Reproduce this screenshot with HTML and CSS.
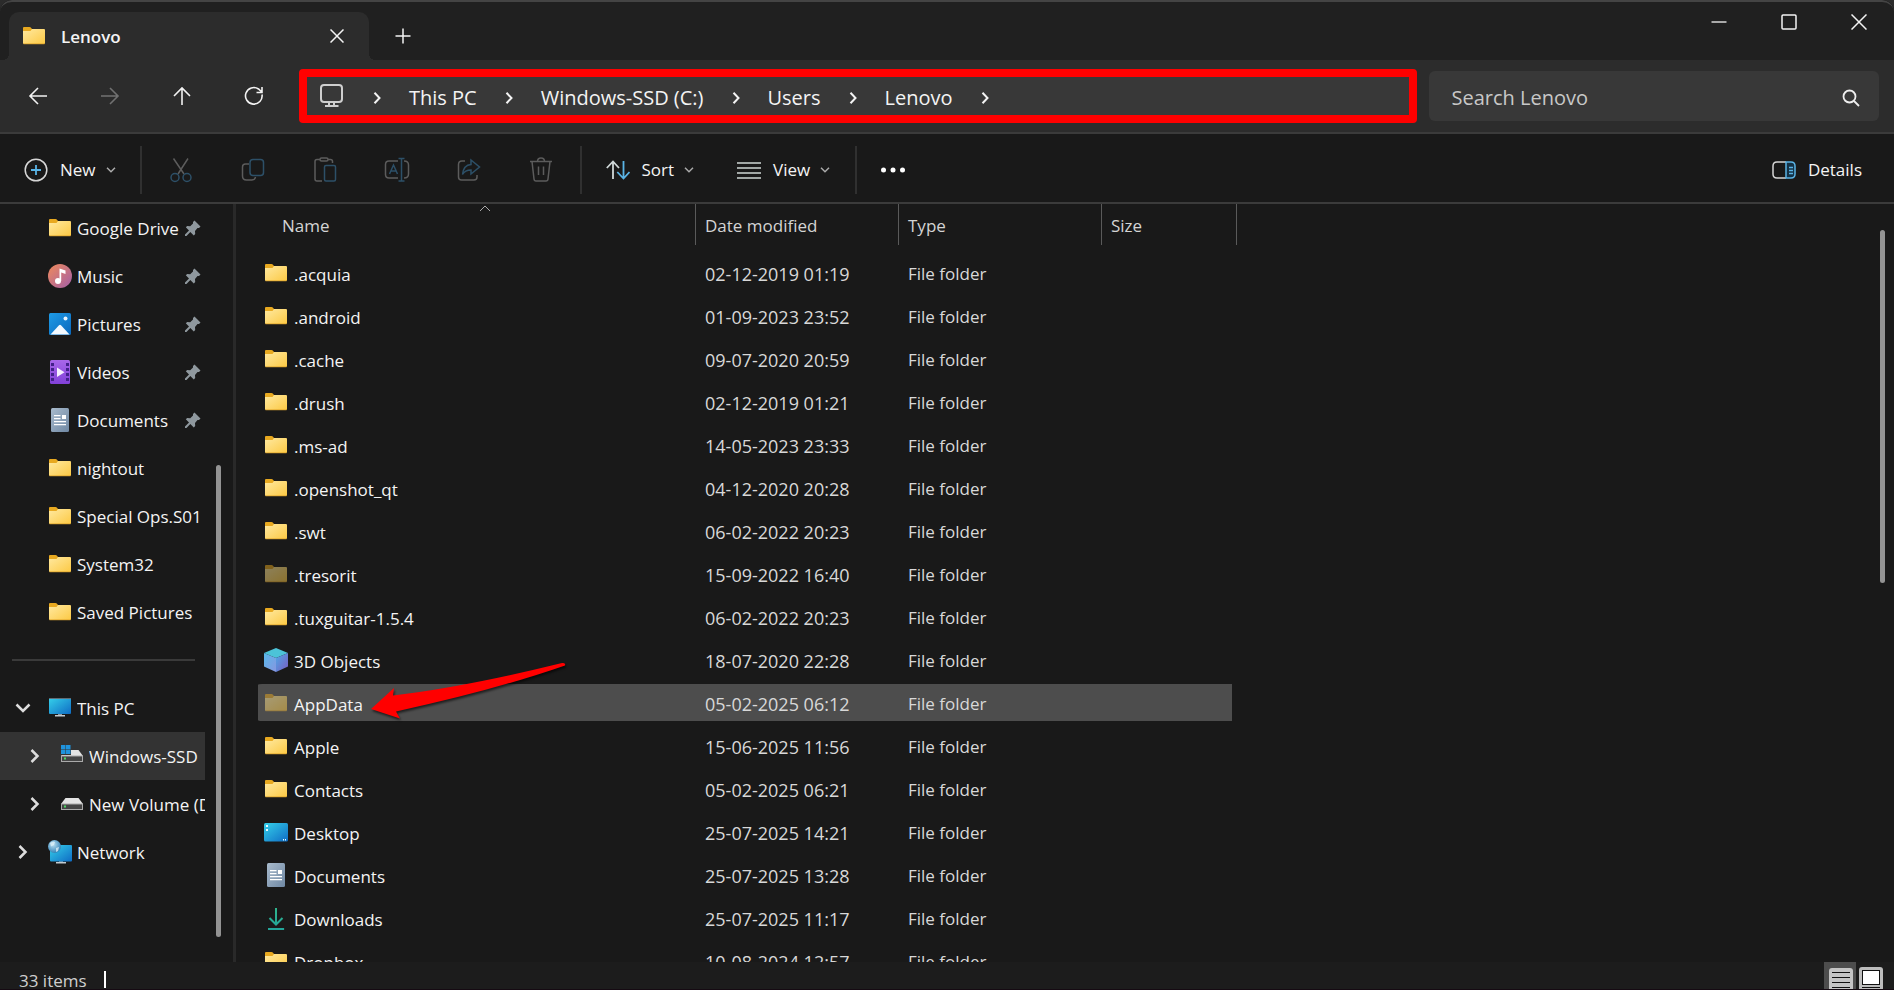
FILE: index.html
```html
<!DOCTYPE html>
<html lang="en">
<head>
<meta charset="utf-8">
<title>Lenovo</title>
<link rel="stylesheet" href="styles.css">
</head>
<body>
<svg class="sprite" aria-hidden="true">
  <defs>
    <linearGradient id="g-folder" x1="0" y1="0" x2="1" y2="1"><stop offset="0" stop-color="#ffe9a0"/><stop offset="1" stop-color="#fcc944"/></linearGradient>
    <linearGradient id="g-music" x1="0" y1="0" x2="1" y2="1"><stop offset="0" stop-color="#f08a5a"/><stop offset="1" stop-color="#a35fa8"/></linearGradient>
    <linearGradient id="g-pic" x1="0" y1="0" x2="1" y2="1"><stop offset="0" stop-color="#1e9be6"/><stop offset="1" stop-color="#0a68bd"/></linearGradient>
    <linearGradient id="g-vid" x1="0" y1="0" x2="0" y2="1"><stop offset="0" stop-color="#a867ea"/><stop offset="1" stop-color="#8140d8"/></linearGradient>
    <linearGradient id="g-doc" x1="0" y1="0" x2="1" y2="1"><stop offset="0" stop-color="#a9bbcd"/><stop offset="1" stop-color="#6f88a3"/></linearGradient>
    <linearGradient id="g-screen" x1="0" y1="0" x2="1" y2="1"><stop offset="0" stop-color="#35d0ea"/><stop offset="1" stop-color="#0f6cc4"/></linearGradient>
    <linearGradient id="g-cube" x1="0" y1="0" x2="1" y2="1"><stop offset="0" stop-color="#4fa8e8"/><stop offset="1" stop-color="#7a5cc0"/></linearGradient>
    <linearGradient id="g-cubel" x1="0" y1="0" x2="1" y2="1"><stop offset="0" stop-color="#58b9ec"/><stop offset="1" stop-color="#8796e0"/></linearGradient>
    <radialGradient id="g-globe" cx="0.4" cy="0.35" r="0.7"><stop offset="0" stop-color="#b9dff2"/><stop offset="1" stop-color="#2b7db3"/></radialGradient>
    <linearGradient id="g-down" x1="0" y1="0" x2="0" y2="1"><stop offset="0" stop-color="#2fb58c"/><stop offset="1" stop-color="#23a59a"/></linearGradient>
  </defs>
  <symbol id="i-folder" viewBox="0 0 24 24"><path fill="#e8a920" d="M1 4q0-1 1-1h5.500q.8 0 1.300.6L10 5v5H1z"/><path fill="url(#g-folder)" d="M1 7h7.500l1.500-2h12q1 0 1 1v13q0 1-1 1H2q-1 0-1-1z"/><path stroke="#e0a52c" stroke-width=".8" d="M1.500 19.800h21"/></symbol>
  <symbol id="i-music" viewBox="0 0 24 24"><circle cx="12" cy="12" r="12" fill="url(#g-music)"/><circle cx="10" cy="17" r="3" fill="#fff"/><path fill="#fff" d="M11.500 17V4.500l6 2V10l-4.300-1.500V17z"/></symbol>
  <symbol id="i-pictures" viewBox="0 0 24 24"><rect x="1" y="1" width="22" height="22" rx="1.500" fill="url(#g-pic)"/><path fill="#f2f9ff" d="M2.500 22.500 11 13.300q1-.9 2 0l8.500 9.200z"/><circle cx="17.500" cy="6.500" r="2" fill="#e8f5ff"/></symbol>
  <symbol id="i-videos" viewBox="0 0 24 24"><rect x="2" width="20" height="24" rx="1.500" fill="url(#g-vid)"/><path fill="#42208a" d="M3 3h3v3H3zM3 8h3v3H3zM3 13h3v3H3zM3 18h3v3H3zM18 3h3v3h-3zM18 8h3v3h-3zM18 13h3v3h-3zM18 18h3v3h-3z"/><path fill="#f6efff" d="M9 7.500v9.500l7.500-4.800z"/></symbol>
  <symbol id="i-documents" viewBox="0 0 24 24"><rect x="3" width="18" height="24" rx="1.500" fill="url(#g-doc)"/><path stroke="#fff" stroke-width="1.200" d="M6 7.600h6.500M6 10.600h6.500M6 13.700h12M6 16.700h12"/><path fill="#fff" d="M14 7h4v4h-4z"/></symbol>
  <symbol id="i-pc" viewBox="0 0 24 24"><path fill="#8d979e" d="M10 17h4v3h-4z"/><path fill="#c3cbd0" d="M7 19h10v1.500H7z"/><rect x="1" y="2" width="22" height="16" rx="1" fill="url(#g-screen)"/><path stroke="#5f6d76" d="M1 2.500h22"/></symbol>
  <symbol id="i-drive" viewBox="0 0 24 24"><path fill="#e4e4e4" d="M5.500 6h13L23 12H1z"/><path fill="#aaa" d="M1 11.500h22V18H1z"/><path fill="#454545" d="M2 12.500h20V17H2z"/><path fill="#4cd964" d="M4 13.500h2v2H4z"/></symbol>
  <symbol id="i-windrive" viewBox="0 0 24 24"><path fill="#e4e4e4" d="M5.500 6h13L23 12H1z"/><path fill="#aaa" d="M1 11.500h22V18H1z"/><path fill="#454545" d="M2 12.500h20V17H2z"/><path fill="#4cd964" d="M4 13.500h2v2H4z"/><path fill="#333" d="M0 0h11v11H0z"/><path fill="#1f93dd" d="M1 1h4.500v4.500H1zM6 1h4.500v4.500H6zM1 6h4.500v4H1zM6 6h4.500v4H6z"/></symbol>
  <symbol id="i-network" viewBox="0 0 24 24"><path fill="#8d979e" d="M11 20h4v3h-4z"/><path fill="#c3cbd0" d="M8 22h10v1.500H8z"/><rect x="2" y="5" width="22" height="16.500" rx="1" fill="url(#g-screen)"/><circle cx="6.500" cy="6.500" r="6.500" fill="url(#g-globe)"/><path fill="#e3f3fa" opacity=".75" d="M2 3q3-2.500 5-1l-1 3-3 1.500zM8 8l3-1-1 4-2 1z"/></symbol>
  <symbol id="i-cube" viewBox="0 0 24 24"><path fill="#4cc3d8" d="M12 0 24 5 12 10 0 5z"/><path fill="url(#g-cubel)" d="M0 5l12 5v14L0 18.500z"/><path fill="url(#g-cube)" d="M24 5l-12 5v14l12-5.500z"/></symbol>
  <symbol id="i-desktop" viewBox="0 0 24 24"><rect y="3" width="24" height="18.500" rx="1.500" fill="url(#g-screen)"/><path fill="#e9fbff" d="M2 5h2v2H2zM2 9h2v2H2zM19 19h1v1.500h-1zM21 19h1v1.500h-1z"/></symbol>
  <symbol id="i-download" viewBox="0 0 24 24"><path fill="none" stroke="url(#g-down)" stroke-width="2" d="M12 2v16.500M5.500 12l6.500 6.500 6.500-6.500M4 23h16.100"/></symbol>
  <symbol id="i-pin" viewBox="0 0 16 16"><path fill="#8f989e" d="M9.500.5 15.500 6.500 14 8h-1.500l-2.500 3 .2 3-1.400 1.400-3.500-3.500L1.500 16 0 15.900 0 14.500l4-4L.8 7.300 2.200 6l3 .2L8 3.500V2z"/></symbol>
  <symbol id="i-right" viewBox="0 0 10 16"><path fill="none" stroke="currentColor" stroke-width="2.500" d="M1.500 2 7.500 8l-6 6"/></symbol>
  <symbol id="i-open" viewBox="0 0 16 10"><path fill="none" stroke="currentColor" stroke-width="2.500" d="M1.500 1.500 8 8l6.500-6.500"/></symbol>
  <symbol id="i-crumb" viewBox="0 0 8 12"><path fill="none" stroke="currentColor" stroke-width="2" d="M1.500 .8 6.500 6l-5 5.200"/></symbol>
  <symbol id="i-drop" viewBox="0 0 10 6"><path fill="none" stroke="#aaa" stroke-width="1.500" d="M1 .8l4 4 4-4"/></symbol>
</svg>

<div class="window">
  <header class="titlebar">
    <div class="tab">
      <svg class="icon"><use href="#i-folder"/></svg>
      <span class="tab-name">Lenovo</span>
      <button class="tab-close" aria-label="Close tab"><svg width="14" height="14" fill="none" stroke="currentColor" stroke-width="1.500"><path d="M.5.5l13 13M13.500.5l-13 13"/></svg></button>
    </div>
    <button class="tab-new" aria-label="New tab"><svg width="16" height="16" stroke="currentColor" stroke-width="1.500"><path d="M8 .5v15M.5 8h15"/></svg></button>
    <div class="controls">
      <button aria-label="Minimize"><svg width="16" height="16"><path stroke="currentColor" stroke-width="1.300" d="M.5 8h15"/></svg></button>
      <button aria-label="Maximize"><svg width="16" height="16"><rect x="1" y="1" width="14" height="14" rx="1" fill="none" stroke="currentColor" stroke-width="1.500"/></svg></button>
      <button aria-label="Close"><svg width="16" height="16"><path stroke="currentColor" stroke-width="1.500" d="M.5.5l15 15M15.500.5l-15 15"/></svg></button>
    </div>
  </header>

  <div class="navbar">
    <div class="history">
      <button aria-label="Back"><svg width="20" height="20"><path d="M19 10H2M10 2l-8 8 8 8"/></svg></button>
      <button aria-label="Forward" disabled><svg width="20" height="20"><path d="M1 10h17M10 2l8 8-8 8"/></svg></button>
      <button aria-label="Up"><svg width="20" height="20"><path d="M10 19V2M2 10l8-8 8 8"/></svg></button>
      <button aria-label="Refresh"><svg width="20" height="20"><path d="M18 8.500A8.300 8.300 0 1 1 14.500 3l3.300 3M18 1v5.500h-5.500"/></svg></button>
    </div>
    <nav class="address" aria-label="Address">
      <svg class="monitor" width="26" height="26" fill="none" stroke="#cfcfcf" stroke-width="2"><rect x="2" y="2" width="21" height="17" rx="3"/><path d="M10 19v4M15 19v4M6 23h13.500"/></svg>
      <svg class="crumb"><use href="#i-crumb"/></svg>
      <a href="#">This PC</a>
      <svg class="crumb"><use href="#i-crumb"/></svg>
      <a href="#">Windows-SSD (C:)</a>
      <svg class="crumb"><use href="#i-crumb"/></svg>
      <a href="#">Users</a>
      <svg class="crumb"><use href="#i-crumb"/></svg>
      <a href="#">Lenovo</a>
      <svg class="crumb"><use href="#i-crumb"/></svg>
    </nav>
    <label class="search">
      <input type="text" placeholder="Search Lenovo" aria-label="Search Lenovo">
      <svg width="18" height="18" fill="none" stroke="#eee" stroke-width="1.800"><circle cx="7.500" cy="7.500" r="6"/><path d="M12 12l5 5"/></svg>
    </label>
  </div>

  <div class="toolbar">
    <button class="menu menu-new"><svg width="24" height="24" fill="none" stroke-width="1.500"><circle cx="12" cy="12" r="10.800" stroke="#d6d6d6"/><path stroke="#5ab4e6" stroke-width="1.800" d="M12 7v10M7 12h10"/></svg>New<svg class="drop"><use href="#i-drop"/></svg></button>
    <span class="rule"></span>
    <div class="tools">
      <button aria-label="Cut" disabled><svg width="24" height="26"><path class="gray" d="M4.500 1.500 15 17M19 1.500 9 17"/><circle class="blue" cx="6" cy="20.500" r="4"/><circle class="blue" cx="18" cy="20.500" r="4"/></svg></button>
      <button aria-label="Copy" disabled><svg width="24" height="26"><path class="gray" d="M8 7H4.500Q1.500 7 1.500 10v9q0 4 4 4H11q3 0 3.500-3"/><rect class="blue" x="9" y="2.500" width="13.500" height="16" rx="3"/></svg></button>
      <button aria-label="Paste" disabled><svg width="24" height="26"><path class="gray" d="M9 24H4q-2 0-2-2V4.500q0-2 2-2h3M15 2.500h2.500q2 0 2 2V6"/><rect class="gray" x="7" y="1" width="8" height="3" rx="1.500"/><rect class="blue" x="11.500" y="8.500" width="11" height="15.500" rx="1.500"/></svg></button>
      <button aria-label="Rename" disabled><svg width="26" height="26"><path class="gray" d="M14 4H5Q1.500 4 1.500 7.500v10Q1.500 21 5 21h9M20 4q4.500 0 4.500 4v9q0 4-4.500 4"/><path class="blue" d="M5.500 17 9.500 8l4 9M7 14h5M17.500 1.500V24M14.500 1.500h6M14.500 24h6"/></svg></button>
      <button aria-label="Share" disabled><svg width="24" height="26"><path class="gray" d="M8 4H5Q1.500 4 1.500 7.500V20q0 3 3 3H17q3 0 3-3v-2"/><path class="blue" d="M14 3l8.500 7-8.500 7v-4q-6 0-8.500 4.500Q6.500 8 14 7.500z"/></svg></button>
      <button aria-label="Delete" disabled><svg width="24" height="26"><path class="gray" d="M1 4.500h22M3 4.500 5 22q.2 2 2 2h10q1.800 0 2-2l2-17.500M8.500 4.500q0-3.500 3.500-3.500t3.500 3.500M9.500 9.500V18M14.500 9.500V18"/></svg></button>
    </div>
    <span class="rule"></span>
    <button class="menu menu-sort"><svg width="24" height="20" fill="none" stroke-width="1.800"><path stroke="#d0d8d8" d="M7 19V2M.8 8 7 1.500 13 8"/><path stroke="#5ab4e6" d="M17.500 1v17M11.300 12l6.200 6.500 6-6.500"/></svg>Sort<svg class="drop"><use href="#i-drop"/></svg></button>
    <button class="menu menu-view"><svg width="24" height="20" stroke="#d0d8d5" stroke-width="1.500"><path d="M0 3h24M0 8h24M0 13h24M0 18h24"/></svg>View<svg class="drop"><use href="#i-drop"/></svg></button>
    <span class="rule"></span>
    <button class="more" aria-label="See more"><svg width="24" height="8" fill="#fff"><circle cx="2.500" cy="4" r="2.500"/><circle cx="12" cy="4" r="2.500"/><circle cx="21.500" cy="4" r="2.500"/></svg></button>
    <button class="menu menu-details"><svg width="24" height="20" fill="none" stroke-width="1.500"><path stroke="#d6d6d6" d="M14 2H5Q1 2 1 6v8q0 4 4 4h9"/><path stroke="#5ab4e6" fill="#143246" d="M14 2h5q4 0 4 4v8q0 4-4 4h-5z"/><path stroke="#5ab4e6" d="M17 7.500h4M17 10.500h4M17 13.500h4"/></svg>Details</button>
  </div>

  <div class="main">
    <aside class="sidebar">
      <nav class="tree" aria-label="Folders">
        <div class="node"><span class="twist"></span><svg class="icon"><use href="#i-folder"/></svg><a href="#">Google Drive</a><svg class="pin"><use href="#i-pin"/></svg></div>
        <div class="node"><span class="twist"></span><svg class="icon"><use href="#i-music"/></svg><a href="#">Music</a><svg class="pin"><use href="#i-pin"/></svg></div>
        <div class="node"><span class="twist"></span><svg class="icon"><use href="#i-pictures"/></svg><a href="#">Pictures</a><svg class="pin"><use href="#i-pin"/></svg></div>
        <div class="node"><span class="twist"></span><svg class="icon"><use href="#i-videos"/></svg><a href="#">Videos</a><svg class="pin"><use href="#i-pin"/></svg></div>
        <div class="node"><span class="twist"></span><svg class="icon"><use href="#i-documents"/></svg><a href="#">Documents</a><svg class="pin"><use href="#i-pin"/></svg></div>
        <div class="node"><span class="twist"></span><svg class="icon"><use href="#i-folder"/></svg><a href="#">nightout</a></div>
        <div class="node"><span class="twist"></span><svg class="icon"><use href="#i-folder"/></svg><a href="#">Special Ops.S01</a></div>
        <div class="node"><span class="twist"></span><svg class="icon"><use href="#i-folder"/></svg><a href="#">System32</a></div>
        <div class="node"><span class="twist"></span><svg class="icon"><use href="#i-folder"/></svg><a href="#">Saved Pictures</a></div>
        <hr>
        <div class="node"><button class="twist" aria-label="Collapse This PC"><svg width="16" height="10"><use href="#i-open"/></svg></button><svg class="icon"><use href="#i-pc"/></svg><a href="#">This PC</a></div>
        <div class="node child current"><button class="twist" aria-label="Expand Windows-SSD"><svg width="10" height="16"><use href="#i-right"/></svg></button><svg class="icon"><use href="#i-windrive"/></svg><a href="#">Windows-SSD</a></div>
        <div class="node child"><button class="twist" aria-label="Expand New Volume"><svg width="10" height="16"><use href="#i-right"/></svg></button><svg class="icon"><use href="#i-drive"/></svg><a href="#">New Volume (D:)</a></div>
        <div class="node"><button class="twist" aria-label="Expand Network"><svg width="10" height="16"><use href="#i-right"/></svg></button><svg class="icon"><use href="#i-network"/></svg><a href="#">Network</a></div>
      </nav>
      <div class="side-thumb"></div>
    </aside>

    <div class="files">
      <table>
        <colgroup><col class="c-name"><col class="c-date"><col class="c-type"><col class="c-size"></colgroup>
        <thead>
          <tr>
            <th><div>Name<svg class="sorted" width="12" height="7" fill="none" stroke="#aaa"><path d="M1 6l5-5 5 5"/></svg></div></th>
            <th><div>Date modified</div></th>
            <th><div>Type</div></th>
            <th><div>Size</div></th>
          </tr>
        </thead>
        <tbody>
          <tr><td><div><svg class="icon"><use href="#i-folder"/></svg>.acquia</div></td><td>02-12-2019 01:19</td><td>File folder</td><td></td></tr>
          <tr><td><div><svg class="icon"><use href="#i-folder"/></svg>.android</div></td><td>01-09-2023 23:52</td><td>File folder</td><td></td></tr>
          <tr><td><div><svg class="icon"><use href="#i-folder"/></svg>.cache</div></td><td>09-07-2020 20:59</td><td>File folder</td><td></td></tr>
          <tr><td><div><svg class="icon"><use href="#i-folder"/></svg>.drush</div></td><td>02-12-2019 01:21</td><td>File folder</td><td></td></tr>
          <tr><td><div><svg class="icon"><use href="#i-folder"/></svg>.ms-ad</div></td><td>14-05-2023 23:33</td><td>File folder</td><td></td></tr>
          <tr><td><div><svg class="icon"><use href="#i-folder"/></svg>.openshot_qt</div></td><td>04-12-2020 20:28</td><td>File folder</td><td></td></tr>
          <tr><td><div><svg class="icon"><use href="#i-folder"/></svg>.swt</div></td><td>06-02-2022 20:23</td><td>File folder</td><td></td></tr>
          <tr><td><div><svg class="icon hidden-item"><use href="#i-folder"/></svg>.tresorit</div></td><td>15-09-2022 16:40</td><td>File folder</td><td></td></tr>
          <tr><td><div><svg class="icon"><use href="#i-folder"/></svg>.tuxguitar-1.5.4</div></td><td>06-02-2022 20:23</td><td>File folder</td><td></td></tr>
          <tr><td><div><svg class="icon"><use href="#i-cube"/></svg>3D Objects</div></td><td>18-07-2020 22:28</td><td>File folder</td><td></td></tr>
          <tr class="selected"><td><div><svg class="icon hidden-item"><use href="#i-folder"/></svg>AppData<svg class="arrow" width="210" height="72"><path fill="#f00" d="M6 53 29 32l-1 7.500Q100 31 197 7q4-.5 3 2.500Q130 34 31 55.500l4 7z"/></svg></div></td><td>05-02-2025 06:12</td><td>File folder</td><td></td></tr>
          <tr><td><div><svg class="icon"><use href="#i-folder"/></svg>Apple</div></td><td>15-06-2025 11:56</td><td>File folder</td><td></td></tr>
          <tr><td><div><svg class="icon"><use href="#i-folder"/></svg>Contacts</div></td><td>05-02-2025 06:21</td><td>File folder</td><td></td></tr>
          <tr><td><div><svg class="icon"><use href="#i-desktop"/></svg>Desktop</div></td><td>25-07-2025 14:21</td><td>File folder</td><td></td></tr>
          <tr><td><div><svg class="icon"><use href="#i-documents"/></svg>Documents</div></td><td>25-07-2025 13:28</td><td>File folder</td><td></td></tr>
          <tr><td><div><svg class="icon"><use href="#i-download"/></svg>Downloads</div></td><td>25-07-2025 11:17</td><td>File folder</td><td></td></tr>
          <tr><td><div><svg class="icon"><use href="#i-folder"/></svg>Dropbox</div></td><td>10-08-2024 12:57</td><td>File folder</td><td></td></tr>
        </tbody>
      </table>
    </div>
    <div class="main-scroll"><div class="main-thumb"></div></div>
  </div>

  <footer class="status">
    <span class="count">33 items</span><span class="caret"></span>
    <div class="modes">
      <button class="on" aria-label="Details view"><svg width="24" height="24"><rect width="24" height="24" rx="3" fill="#c4c4c4"/><path stroke="#111" d="M3 4.500h18M3 9.500h18M3 14.500h18M3 19.500h18"/></svg></button>
      <button aria-label="Large icons view"><svg width="24" height="24"><rect width="24" height="24" rx="3" fill="#bdbdbd"/><rect x="3.500" y="3.500" width="17" height="14" fill="#fff" stroke="#111"/><path stroke="#111" d="M3 20.500h18"/></svg></button>
    </div>
  </footer>
</div>
</body>
</html>
```
FILE: styles.css
```css
* { box-sizing: border-box; }

body {
  margin: 0;
  background: #2b2b2b;
  color: #f4f4f4;
  font: 17px/24px "Open Sans", "Noto Sans", sans-serif;
}

button {
  display: flex;
  align-items: center;
  justify-content: center;
  padding: 0;
  border: 0;
  background: none;
  color: inherit;
  font: inherit;
}

a { color: inherit; text-decoration: none; }
svg { display: block; flex: none; }

.sprite { position: absolute; width: 0; height: 0; }
.icon { width: 24px; height: 24px; }

.window {
  display: grid;
  grid-template-rows: 60px 74px 70px minmax(0, 1fr) 28px;
  height: 100vh;
  overflow: hidden;
  background: #191919;
  border-radius: 12px 12px 0 0;
}

/* Title bar */
.titlebar {
  display: flex;
  align-items: flex-start;
  padding-left: 9px;
  background: #202020;
  border-top: 2px solid #444;
  border-radius: 12px 12px 0 0;
}

.tab {
  position: relative;
  display: flex;
  align-items: center;
  width: 360px;
  height: 48px;
  margin-top: 10px;
  padding: 0 25px 0 13px;
  background: #2c2c2c;
  border-radius: 10px 10px 0 0;
}

.tab::before,
.tab::after {
  content: "";
  position: absolute;
  bottom: 0;
  width: 6px;
  height: 6px;
}

.tab::before { right: 100%; background: radial-gradient(circle at 0 0, #202020 6px, #2c2c2c 6px); }
.tab::after { left: 100%; background: radial-gradient(circle at 100% 0, #202020 6px, #2c2c2c 6px); }

.tab-name { margin-left: 15px; padding-top: 1px; font-weight: 600; }
.tab-close { margin-left: auto; }
.tab-new { width: 68px; height: 48px; margin-top: 10px; }
.controls { display: flex; margin-left: auto; }
.controls button { width: 70px; height: 40px; }

/* Navigation bar */
.navbar {
  display: flex;
  align-items: center;
  padding: 0 15px 0 2px;
  background: #2c2c2c;
  border-bottom: 2px solid #3b3b3b;
}

.history { display: flex; margin-right: 9px; }
.history button { width: 72px; height: 48px; }
.history svg { fill: none; stroke: #f2f2f2; stroke-width: 1.6; }
.history button:disabled svg { stroke: #717171; }

.address {
  display: flex;
  flex: 1;
  align-items: center;
  height: 54px;
  margin-right: 12px;
  padding: 4px 0 0 12px;
  background: #383838;
  border: 8px solid #f00;
  border-radius: 4px;
  font-size: 20px;
  white-space: nowrap;
}

.monitor { margin-bottom: 4px; }
.crumb { width: 8px; height: 12px; margin: 0 28px; }

.search {
  display: flex;
  align-items: center;
  width: 24%;
  height: 50px;
  padding: 3px 19px 0 23px;
  background: #383838;
  border-radius: 6px;
}

.search input {
  flex: 1;
  min-width: 0;
  padding: 0;
  border: 0;
  outline: 0;
  background: none;
  color: #fff;
  font: inherit;
  font-size: 20px;
}

.search input::placeholder { color: #c8c8c8; opacity: 1; }

/* Command bar */
.toolbar {
  display: flex;
  align-items: center;
  padding: 4px 32px 0 24px;
  border-bottom: 2px solid #3b3b3b;
}

.menu { gap: 12px; height: 48px; }
.drop { width: 10px; height: 6px; margin-left: -2px; }
.rule { width: 2px; height: 48px; background: #303030; }
.menu-new { margin-right: 24px; }
.tools { display: flex; margin: 0 3px; }
.tools button { width: 72px; height: 48px; }
.tools svg { fill: none; stroke-width: 1.5; }
.gray { stroke: #5c5c5c; }
.blue { stroke: #2d5068; }
.menu-sort { margin: 0 43px 0 24px; }
.menu-view { margin-right: 25px; }
.more { width: 72px; height: 48px; }
.menu-details { margin-left: auto; }

/* Content */
.main { display: flex; min-height: 0; overflow: hidden; }

.sidebar {
  display: flex;
  flex: none;
  width: 236px;
  border-right: 3px solid #292929;
}

.tree { width: 205px; }

.node {
  display: flex;
  align-items: center;
  height: 48px;
  padding-left: 12px;
  overflow: hidden;
}

.node a {
  flex: 1;
  min-width: 0;
  margin-left: 5px;
  padding-top: 2px;
  overflow: hidden;
  white-space: nowrap;
}

.child { padding-left: 24px; }
.current { background: #333; }
.twist { flex: none; width: 22px; margin-right: 14px; color: #ddd; }
.pin { width: 16px; height: 16px; margin-right: 4px; }

.tree hr {
  height: 2px;
  margin: 23px 10px 23px 12px;
  border: 0;
  background: #3a3a3a;
}

.side-thumb {
  align-self: flex-end;
  width: 5px;
  height: 472px;
  margin: 0 0 25px 11px;
  border-radius: 3px;
  background: #939393;
}

.files { flex: 1; min-width: 0; padding-left: 22px; overflow: hidden; }

table {
  width: 979px;
  table-layout: fixed;
  border-spacing: 0;
}

.c-name { width: 437px; }
.c-date, .c-type { width: 203px; }
.c-size { width: 136px; }

th, td { padding: 0; text-align: left; }
th { height: 47px; vertical-align: top; font-weight: 400; }

th div {
  position: relative;
  height: 41px;
  padding: 10px 0 0 9px;
  border-left: 1px solid #5a5a5a;
  color: #d4d4d4;
}

th:first-child div { padding-left: 23px; border-color: transparent; }
th:last-child div { border-right: 1px solid #5a5a5a; }
.sorted { position: absolute; top: 1px; left: 220px; }

td {
  height: 43px;
  padding: 3px 0 0 10px;
  border: 0 solid transparent;
  border-width: 3px 0;
  background-clip: padding-box;
  color: #d8d8d8;
}

td:nth-child(2) { font-size: 18px; }
td:first-child { padding: 0 0 0 6px; color: #f4f4f4; }
td:last-child { border-right-width: 5px; }

td div {
  position: relative;
  display: flex;
  align-items: center;
  gap: 6px;
  height: 37px;
  padding-top: 4px;
}

td .icon { margin-bottom: 4px; }
.selected td { background-color: #4d4d4d; }
.selected td:first-child { border-radius: 4px 0 0 4px; }
.hidden-item { opacity: 0.5; }

.arrow {
  position: absolute;
  top: -28px;
  left: 101px;
  filter: drop-shadow(1px 2px 1px rgba(0, 0, 0, 0.6));
}

.main-scroll { width: 14px; }
.main-thumb { width: 5px; height: 353px; margin-top: 26px; border-radius: 3px; background: #939393; }

/* Status bar */
.status {
  display: flex;
  align-items: flex-start;
  padding: 0 11px 0 19px;
  overflow: hidden;
  background: #1c1c1c;
  border-bottom: 1px solid #150a12;
}

.count { padding-top: 7px; color: #cfcfcf; }
.caret { width: 2px; height: 17px; margin: 9px 0 0 17px; background: #fff; }
.modes { display: flex; gap: 3px; margin-left: auto; }
.modes button { padding-top: 4px; }
.modes .on { padding: 6px 3px 0 5px; background: #4d4d4d; }
```
